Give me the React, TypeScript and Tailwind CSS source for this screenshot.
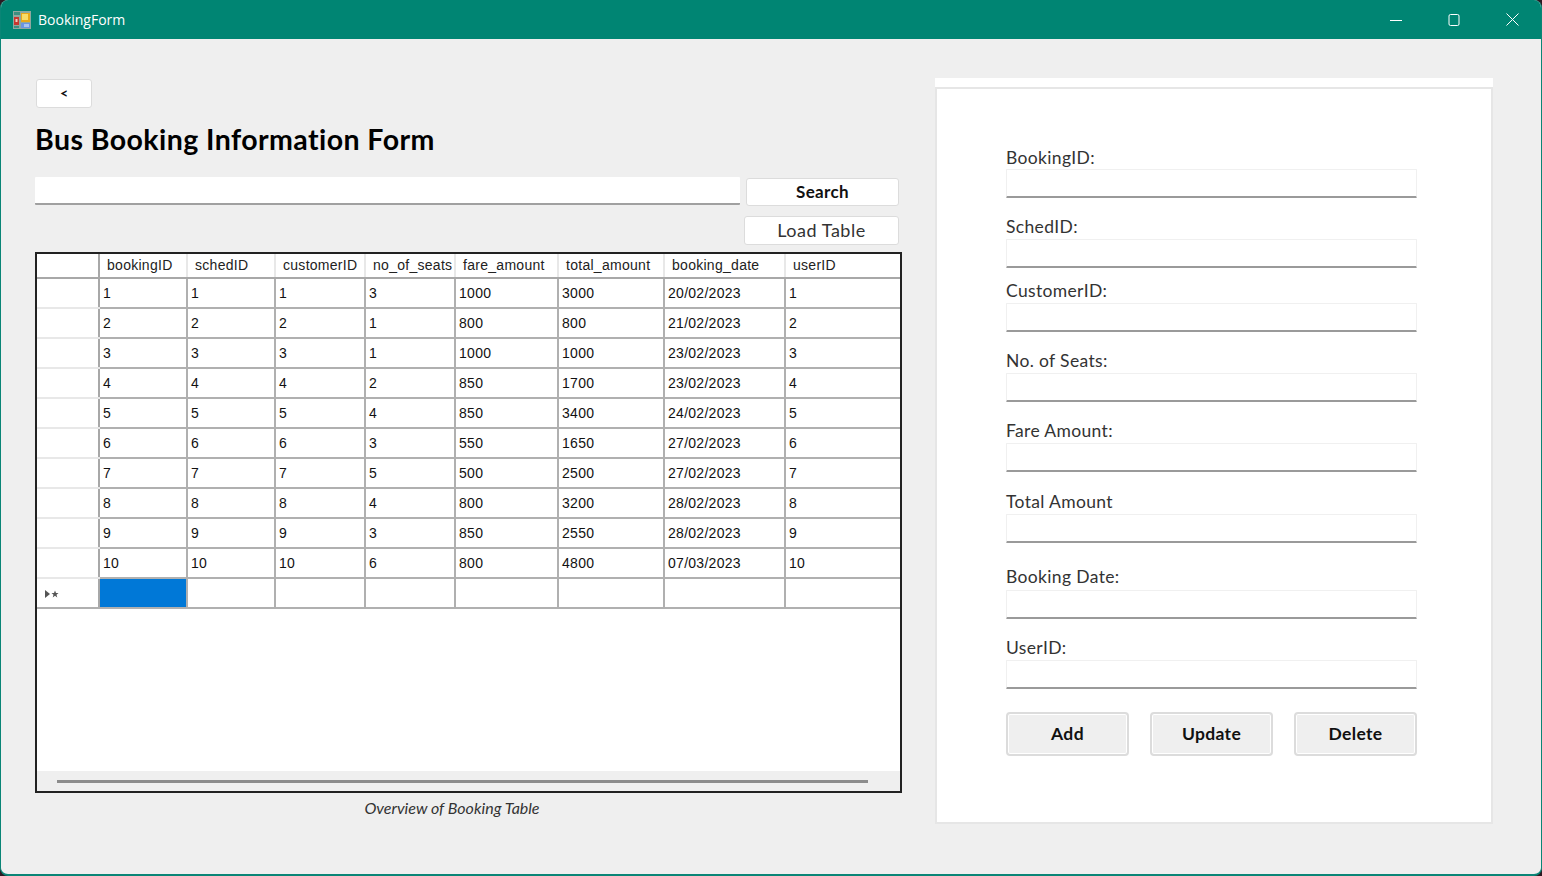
const cols = [
  "bookingID",
  "schedID",
  "customerID",
  "no_of_seats",
  "fare_amount",
  "total_amount",
  "booking_date",
  "userID",
];

const rows = [
  ["1", "1", "1", "3", "1000", "3000", "20/02/2023", "1"],
  ["2", "2", "2", "1", "800", "800", "21/02/2023", "2"],
  ["3", "3", "3", "1", "1000", "1000", "23/02/2023", "3"],
  ["4", "4", "4", "2", "850", "1700", "23/02/2023", "4"],
  ["5", "5", "5", "4", "850", "3400", "24/02/2023", "5"],
  ["6", "6", "6", "3", "550", "1650", "27/02/2023", "6"],
  ["7", "7", "7", "5", "500", "2500", "27/02/2023", "7"],
  ["8", "8", "8", "4", "800", "3200", "28/02/2023", "8"],
  ["9", "9", "9", "3", "850", "2550", "28/02/2023", "9"],
  ["10", "10", "10", "6", "800", "4800", "07/03/2023", "10"],
];

const gridClass =
  "grid grid-cols-[63px_88px_88px_90px_90px_103px_106px_121px_114px]";

const fields = [
  { label: "BookingID:", labelH: "h-[23px]", mb: "mb-[17px]" },
  { label: "SchedID:", labelH: "h-[24px]", mb: "mb-[11px]" },
  { label: "CustomerID:", labelH: "h-[24px]", mb: "mb-[17px]" },
  { label: "No. of Seats:", labelH: "h-[24px]", mb: "mb-[17px]" },
  { label: "Fare Amount:", labelH: "h-[24px]", mb: "mb-[18px]" },
  { label: "Total Amount", labelH: "h-[24px]", mb: "mb-[22px]" },
  { label: "Booking Date:", labelH: "h-[25px]", mb: "mb-[17px]" },
  { label: "UserID:", labelH: "h-[24px]", mb: "mb-[23px]" },
];

function AppIcon() {
  return (
    <svg width="18" height="18" viewBox="0 0 18 18" className="mr-[7px] shrink-0">
      <rect x="0" y="0" width="18" height="18" fill="#8fa8a0" />
      <rect x="1" y="1" width="6" height="3" fill="#3d8f80" />
      <rect x="1" y="6" width="5" height="8" fill="#c8372f" />
      <rect x="2.5" y="8" width="2" height="3" fill="#f0d0c0" />
      <rect x="1" y="15" width="5" height="2" fill="#3d8f80" />
      <rect x="8" y="2" width="9" height="9" fill="#e8a818" />
      <rect x="9" y="3" width="6" height="6" fill="#f8dc68" />
      <rect x="8" y="12" width="9" height="5" fill="#6a94e0" />
      <rect x="11" y="13" width="5" height="3" fill="#a8c4f0" />
    </svg>
  );
}

function WindowControls() {
  return (
    <div className="ml-auto flex h-full items-center">
      <div className="flex w-[58px] justify-center">
        <svg width="12" height="12" viewBox="0 0 12 12">
          <path d="M0 6.5H12" stroke="#fff" strokeWidth="1" />
        </svg>
      </div>
      <div className="flex w-[58px] justify-center">
        <svg width="12" height="12" viewBox="0 0 12 12">
          <rect x="1" y="0.5" width="10" height="11" rx="1.5" fill="none" stroke="#fff" strokeWidth="1" />
        </svg>
      </div>
      <div className="flex w-[58px] justify-center">
        <svg width="13" height="13" viewBox="0 0 13 13">
          <path d="M0.5 0.5L12.5 12.5M12.5 0.5L0.5 12.5" stroke="#fff" strokeWidth="1" />
        </svg>
      </div>
    </div>
  );
}

function DataGrid() {
  return (
    <div className="flex h-[541px] flex-col border-2 border-[#222] bg-white font-['Liberation_Sans',sans-serif] text-[14px] tracking-[0.02em] text-[#111]">
      <div className={`${gridClass} h-[25px] border-b-2 border-[#a8a8a8]`}>
        <div className="border-r-2 border-[#a8a8a8]" />
        {cols.map((c, i) => (
          <div
            key={c}
            className={`flex items-center pl-[7px] text-[#222] ${i < cols.length - 1 ? "border-r-2 border-[#e8e8e8]" : ""}`}
          >
            {c}
          </div>
        ))}
      </div>
      {rows.map((r, ri) => (
        <div key={ri} className={`${gridClass} h-[30px] border-b-2 border-[#b0b0b0]`}>
          <div className="border-r-2 border-[#a8a8a8] shadow-[0_2px_0_#e8e8e8]" />
          {r.map((v, i) => (
            <div
              key={i}
              className={`flex items-center pl-[3px] ${i < r.length - 1 ? "border-r-2 border-[#b0b0b0]" : ""}`}
            >
              {v}
            </div>
          ))}
        </div>
      ))}
      <div className={`${gridClass} h-[30px] border-b-2 border-[#b0b0b0]`}>
        <div className="flex items-center border-r-2 border-[#a8a8a8] pl-[8px] pt-[2px]">
          <svg width="14" height="8" viewBox="0 0 14 8">
            <path d="M0 0L5 4L0 8Z" fill="#555" />
            <path d="M10 0.5L11 3H13.5L11.5 4.7L12.3 7.5L10 5.8L7.7 7.5L8.5 4.7L6.5 3H9Z" fill="#555" />
          </svg>
        </div>
        <div className="border-r-2 border-[#b0b0b0] bg-[#0078d7]" />
        {cols.slice(1).map((c, i) => (
          <div key={c} className={i < cols.length - 2 ? "border-r-2 border-[#b0b0b0]" : ""} />
        ))}
      </div>
      <div className="flex-1" />
      <div className="flex h-[20px] items-center bg-[#efefef] pl-[20px]">
        <div className="h-[3px] w-[811px] bg-[#8c8c8c]" />
      </div>
    </div>
  );
}

export default function App() {
  return (
    <div className="h-[876px] w-[1542px] overflow-hidden bg-[#2c1a22] font-['Lato',sans-serif]">
      <div className="flex h-full flex-col overflow-hidden rounded-[8px] border-x border-b-2 border-[#0a8576] bg-[#efefef]">
        <div className="flex h-[39px] shrink-0 items-center bg-[#008573] pl-[12px] text-white">
          <AppIcon />
          <span className="font-['Open_Sans',sans-serif] text-[14px]">BookingForm</span>
          <WindowControls />
        </div>

        <div className="flex flex-1">
          <div className="ml-[34px] w-[867px] pt-[40px]">
            <button className="flex h-[29px] w-[56px] ml-[1px] items-center justify-center rounded-[3px] border border-[#dcdcdc] bg-white pb-[2px] text-[14px] font-black text-[#111]">
              &lt;
            </button>
            <h1 className="mt-[14px] h-[34px] text-[28.5px] font-bold leading-[34px] tracking-[0.015em] text-black">
              Bus Booking Information Form
            </h1>
            <div className="mt-[21px] flex items-start">
              <div className="h-[28px] w-[705px] rounded-[1px] border-b-2 border-[#a0a0a0] bg-white" />
              <button className="ml-[6px] mt-[1px] h-[28px] w-[153px] rounded-[3px] border border-[#dcdcdc] bg-white text-[17px] font-bold tracking-[0.02em] text-[#111]">
                Search
              </button>
            </div>
            <div className="mt-[10px] flex justify-end pr-[3px]">
              <button className="h-[29px] w-[155px] rounded-[3px] border border-[#dcdcdc] bg-white text-[18px] tracking-[0.03em] text-[#333]">
                Load Table
              </button>
            </div>
            <div className="mt-[7px]">
              <DataGrid />
            </div>
            <p className="mt-[5px] pr-[33px] text-center text-[16px] italic leading-[20px] text-[#333]">
              Overview of Booking Table
            </p>
          </div>

          <div className="ml-[33px] w-[558px] pt-[39px]">
            <div className="h-[9px] bg-white" />
            <div className="h-[737px] border-2 border-[#e6e6e6] bg-white pl-[69px] pt-[57px]">
              {fields.map((f) => (
                <div key={f.label} className={f.mb}>
                  <div className={`${f.labelH} text-[17.5px] leading-[24px] tracking-[0.02em] text-[#333]`}>
                    {f.label}
                  </div>
                  <div className="h-[29px] w-[411px] rounded-[1px] border border-b-2 border-[#f0f0f0] border-b-[#9a9a9a] bg-white" />
                </div>
              ))}
              <div className="flex w-[411px] justify-between">
                {["Add", "Update", "Delete"].map((b) => (
                  <button
                    key={b}
                    className="h-[44px] w-[123px] rounded-[4px] border-2 border-[#dcdcdc] bg-[#efefef] text-[17.5px] font-bold tracking-[0.02em] text-[#111] shadow-[inset_0_0_0_1px_#fff]"
                  >
                    {b}
                  </button>
                ))}
              </div>
            </div>
          </div>
        </div>
      </div>
    </div>
  );
}
